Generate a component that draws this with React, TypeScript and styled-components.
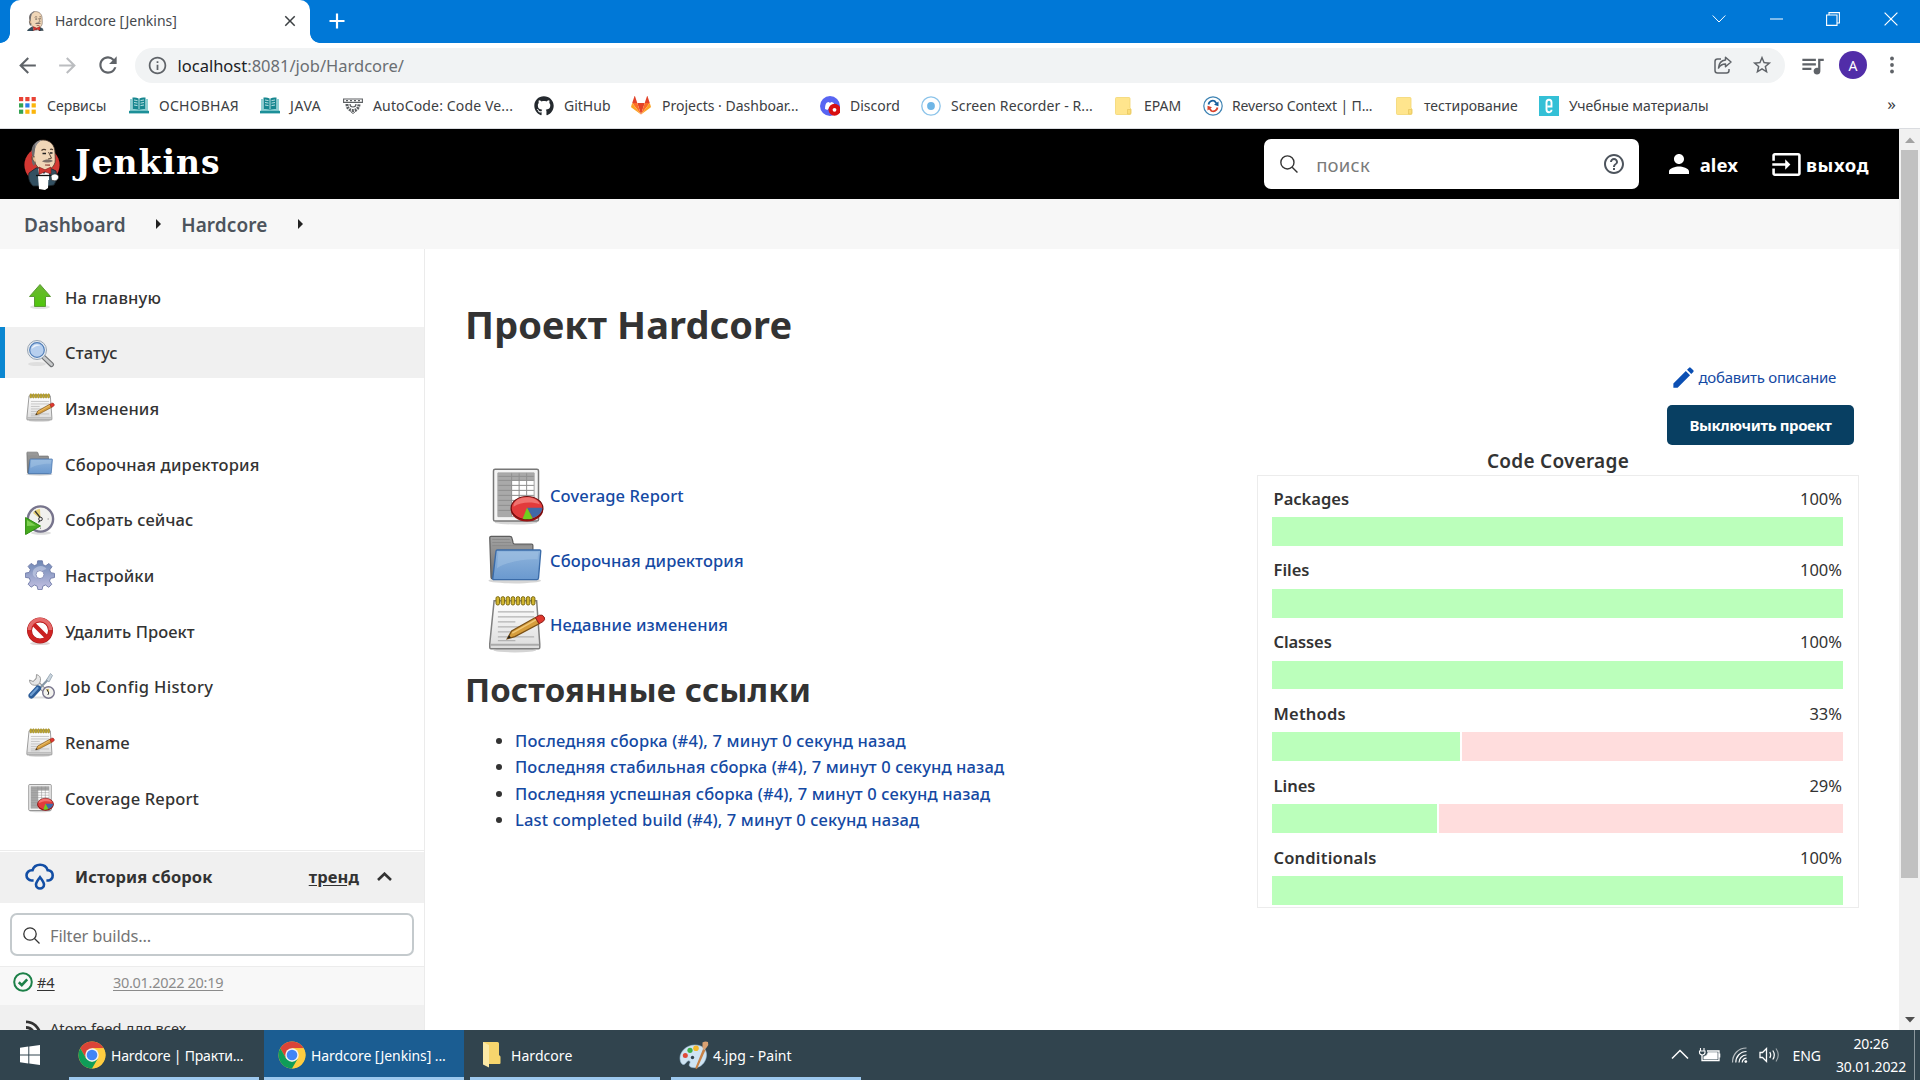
import React from "react";
import styled, { createGlobalStyle, css } from "styled-components";
import {
  MdArrowBack,
  MdArrowForward,
  MdClose,
  MdEdit,
  MdHelpOutline,
  MdInfoOutline,
  MdInput,
  MdPerson,
  MdQueueMusic,
  MdRefresh,
  MdRssFeed,
  MdStarBorder,
} from "react-icons/md";
import { FaGithub } from "react-icons/fa";

const Global = createGlobalStyle`
  *, *::before, *::after { box-sizing: border-box; }
  html, body { margin: 0; padding: 0; overflow: hidden; background: #fff; }
  body { font-family: "Noto Sans", "Open Sans", sans-serif; color: #333; }
  svg { display: block; flex: none; }
`;

const Screen = styled.div`
  width: 1920px;
  height: 1080px;
  display: grid;
  grid-template-rows: 1030px 50px;
  overflow: hidden;
`;

const Browser = styled.div`
  display: grid;
  grid-template-rows: 43px 45px 40px 1px 901px;
  overflow: hidden;
  background: #fff;
`;

/* ---------- tab strip ---------- */

const TabStrip = styled.div`
  display: flex;
  background: #0078d7;
  align-items: stretch;
`;

const TabFlare = styled.div<{ $side: "left" | "right" }>`
  width: 10px;
  background: radial-gradient(
    circle at ${(p) => (p.$side === "left" ? "0 33px" : "10px 33px")},
    #0078d7 9.5px,
    #fff 10.2px
  );
  ${css`clip-path: inset(33px 0 0 0);`}
`;

const Tab = styled.div`
  width: 300px;
  background: #fff;
  border-radius: 10px 10px 0 0;
  display: flex;
  align-items: center;
  padding: 0 11px 2px 16px;
  font-size: 14px;
  color: #45494d;
`;

const TabTitle = styled.span`
  margin-left: 10px;
  flex: 1;
  white-space: nowrap;
`;

const NewTab = styled.div`
  display: flex;
  align-items: center;
  padding: 0 0 1px 9px;
`;

const WindowButtons = styled.div`
  margin-left: auto;
  display: flex;
  width: 230px;
  height: 37px;
`;

const WindowButton = styled.div`
  width: 57.4px;
  display: grid;
  place-items: center;
`;

/* ---------- toolbar ---------- */

const Toolbar = styled.div`
  display: flex;
  align-items: center;
  padding: 0 0 1px 15px;
  color: #5f6368;
`;

const NavButton = styled.div<{ $dim?: boolean }>`
  width: 40px;
  display: flex;
  color: ${(p) => (p.$dim ? "#bbbdc0" : "#5f6368")};
`;

const Omnibox = styled.div`
  width: 1650px;
  height: 35px;
  border-radius: 18px;
  background: #f1f3f4;
  display: flex;
  align-items: center;
  padding: 0 12px 0 12px;
`;

const Url = styled.div`
  flex: 1;
  margin: 1px 0 0 9.5px;
  font-size: 16.5px;
  color: #6a6e72;
  line-height: 30px;
  span { color: #202124; }
`;

const OmniIcons = styled.div`
  display: flex;
  gap: 18.5px;
  align-items: center;
`;

const ToolbarEnd = styled.div`
  display: flex;
  align-items: center;
  padding-left: 14px;
`;

const Avatar = styled.div`
  width: 28px;
  height: 28px;
  margin-left: 13px;
  margin-right: 23px;
  border-radius: 50%;
  background: #512da8;
  color: #fff;
  font-size: 14px;
  display: grid;
  place-items: center;
`;

/* ---------- bookmarks ---------- */

const Bookmarks = styled.div`
  display: flex;
  align-items: center;
  padding: 0 0 5px 19px;
  font-size: 14px;
  color: #3c4043;
`;

const Bookmark = styled.div<{ $width: number; $gap?: number; $spacing?: number }>`
  width: ${(p) => p.$width}px;
  display: flex;
  align-items: center;
  gap: ${(p) => p.$gap ?? 10}px;
  letter-spacing: ${(p) => p.$spacing ?? 0}px;
  white-space: nowrap;
`;

const BookmarkOverflow = styled.div`
  margin-left: auto;
  padding: 0 24px 4px 0;
  font-size: 17px;
`;

const Divider = styled.div`
  background: #dadce0;
`;

/* ---------- page ---------- */

const Viewport = styled.div`
  display: grid;
  grid-template-columns: 1899px 21px;
  overflow: hidden;
`;

const JenkinsPage = styled.div`
  display: grid;
  grid-template-rows: 70px 50px 781px;
  overflow: hidden;
`;

const Header = styled.header`
  background: #000;
  color: #fff;
  display: flex;
  align-items: center;
  padding: 0 30px 0 24px;
`;

const Brand = styled.div`
  margin: 0 auto 4px 14px;
  font: 700 33px "DejaVu Serif", serif;
  letter-spacing: 1px;
`;

const SearchBox = styled.div`
  width: 375px;
  height: 50px;
  border-radius: 7px;
  background: #fff;
  color: #7a7a7a;
  display: flex;
  align-items: center;
  padding: 0 13px 0 16px;
  font-size: 18.5px;
  letter-spacing: 0.25px;
`;

const SearchHint = styled.span`
  flex: 1;
  margin-left: 18px;
`;

const HeaderLink = styled.div<{ $left: number; $gap: number; $spacing: number }>`
  margin-left: ${(p) => p.$left}px;
  display: flex;
  align-items: center;
  gap: ${(p) => p.$gap}px;
  font-size: 18.5px;
  font-weight: 700;
  letter-spacing: ${(p) => p.$spacing}px;
`;

const Crumbs = styled.nav`
  background: #f7f7f7;
  display: flex;
  align-items: center;
  padding: 2px 24px 0;
  font-size: 19px;
  font-weight: 600;
  letter-spacing: 0.08px;
  color: #4d545d;
  svg { margin: 0 20px 3px 30.5px; }
`;

const Body = styled.div`
  display: grid;
  grid-template-columns: 425px 1fr;
  overflow: hidden;
`;

/* ---------- sidebar ---------- */

const Sidebar = styled.aside`
  border-right: 1px solid #ebebeb;
  display: flex;
  flex-direction: column;
`;

const Tasks = styled.div`
  display: flex;
  flex-direction: column;
  gap: 4.7px;
  height: 601px;
  padding-top: 22.5px;
`;

const Task = styled.div<{ $active?: boolean; $spacing?: number }>`
  height: 51px;
  flex: none;
  display: flex;
  align-items: center;
  gap: 10px;
  padding-left: 20px;
  border-left: 5px solid ${(p) => (p.$active ? "#0b87d1" : "transparent")};
  background: ${(p) => (p.$active ? "#f0f0f0" : "transparent")};
  font-size: 16.5px;
  font-weight: 500;
  letter-spacing: ${(p) => p.$spacing ?? 0.12}px;
`;

const HistoryHeader = styled.div`
  height: 53px;
  flex: none;
  border-top: 1px solid #ececec;
  padding-top: 1px;
`;

const HistoryBand = styled.div`
  height: 51px;
  background: #f0f0f0;
  display: flex;
  align-items: center;
  padding: 0 32px 3px 25px;
  font-size: 16.5px;
  font-weight: 700;
  letter-spacing: 0.1px;
`;

const HistoryTitle = styled.span`
  margin-left: 20px;
  flex: 1;
`;

const Trend = styled.span`
  text-decoration: underline;
  text-underline-offset: 2px;
  margin-right: 18px;
`;

const FilterRow = styled.div`
  height: 63px;
  flex: none;
  padding: 10px 10px 0;
`;

const Filter = styled.div`
  height: 43px;
  border: 2px solid #c4cacd;
  border-radius: 7px;
  display: flex;
  align-items: center;
  gap: 10px;
  padding: 2px 0 0 11px;
  font-size: 16.5px;
  letter-spacing: -0.16px;
  color: #757575;
`;

const BuildRow = styled.div`
  height: 39px;
  flex: none;
  border-top: 1px solid #ececec;
  background: #f8f8f8;
  display: flex;
  align-items: center;
  padding: 0 0 8px 13px;
  font-size: 14.5px;
`;

const BuildNumber = styled.span`
  width: 76px;
  margin-left: 4px;
  text-decoration: underline;
  text-underline-offset: 2px;
`;

const BuildDate = styled.span`
  color: #8b8b8b;
  letter-spacing: -0.3px;
  text-decoration: underline;
  text-underline-offset: 2px;
`;

const FeedRow = styled.div`
  flex: 1;
  background: #f0f0f0;
  padding: 11px 0 0 22px;
  display: flex;
  align-items: flex-start;
  gap: 4px;
  font-size: 14.5px;
  line-height: 24px;
  letter-spacing: 0.08px;
`;

/* ---------- main ---------- */

const Main = styled.main`
  padding: 52px 40px 0 40px;
`;

const Title = styled.h1`
  margin: 0;
  font-size: 38px;
  line-height: 46px;
  font-weight: 700;
  letter-spacing: 0.1px;
`;

const Columns = styled.div`
  display: flex;
  justify-content: space-between;
`;

const LinkColumn = styled.div`
  padding-top: 116.3px;
`;

const BigLink = styled.div`
  height: 64.5px;
  margin-left: 21px;
  display: flex;
  align-items: center;
  gap: 4px;
  font-size: 16.5px;
  font-weight: 500;
  letter-spacing: 0.12px;
  color: #1449a3;
`;

const Subtitle = styled.h2`
  margin: 13.500px 0 0;
  font-size: 33px;
  line-height: 40px;
  font-weight: 700;
  letter-spacing: 0.1px;
`;

const Permalinks = styled.ul`
  margin: 16.500px 0 0;
  padding: 0;
  list-style: none;
`;

const Permalink = styled.li<{ $spacing: number }>`
  display: flex;
  align-items: center;
  height: 26.5px;
  padding-left: 31px;
  font-size: 16.5px;
  font-weight: 500;
  color: #1449a3;
  letter-spacing: ${(p) => p.$spacing}px;
  white-space: nowrap;
  &::before {
    content: "";
    width: 6px;
    height: 6px;
    margin: 1px 13px 0 0;
    border-radius: 50%;
    background: #333;
  }
`;

const Side = styled.div`
  width: 602px;
  display: flex;
  flex-direction: column;
  padding-top: 18px;
`;

const EditLink = styled.div`
  height: 24px;
  margin-right: 23px;
  align-self: flex-end;
  display: flex;
  align-items: center;
  gap: 1px;
  font-size: 15px;
  letter-spacing: -0.26px;
  color: #1449a3;
`;

const DisableButton = styled.button`
  align-self: flex-end;
  width: 187px;
  height: 40px;
  margin: 16px 5px 0 0;
  padding: 0;
  border: 0;
  border-radius: 5px;
  background: #083f62;
  color: #fff;
  font: 700 15px "Noto Sans", sans-serif;
  letter-spacing: -0.38px;
`;

const CoverageTitle = styled.div`
  height: 30px;
  line-height: 32px;
  text-align: center;
  font-size: 19px;
  font-weight: 600;
  letter-spacing: 0.25px;
`;

const CoverageBox = styled.div`
  height: 433px;
  border: 1px solid #ececec;
  padding: 10.6px 15px 0 14px;
  display: flex;
  flex-direction: column;
  gap: 12.6px;
`;

const Metric = styled.div`
  display: grid;
  grid-template-rows: 24px 28.8px;
  row-gap: 6.4px;
`;

const MetricHead = styled.div`
  display: flex;
  justify-content: space-between;
  padding: 0 1px 0 1.5px;
  font-size: 16.5px;
  line-height: 24px;
`;

const MetricName = styled.span<{ $spacing: number }>`
  font-weight: 600;
  letter-spacing: ${(p) => p.$spacing}px;
`;

const Bar = styled.div`
  display: flex;
  gap: 2px;
`;

const Covered = styled.div<{ $width: string }>`
  width: ${(p) => p.$width};
  background: #bbffbb;
`;

const Missed = styled.div`
  flex: 1;
  background: #ffdddd;
`;

/* ---------- scrollbar ---------- */

const Scrollbar = styled.div`
  background: #f1f1f1;
  display: grid;
  grid-template-rows: 21px 728px 1fr 21px;
  justify-items: center;
  align-items: center;
`;

const Thumb = styled.div`
  width: 17px;
  height: 728px;
  background: #c1c1c1;
`;

/* ---------- taskbar ---------- */

const Taskbar = styled.div`
  background: #31444e;
  display: flex;
  color: #fff;
  font-size: 14px;
`;

const StartButton = styled.div`
  width: 60px;
  display: grid;
  place-items: center;
`;

const TaskButton = styled.div<{ $active?: boolean; $left: number; $width: number; $pad: number; $gap: number; $spacing?: number }>`
  margin-left: ${(p) => p.$left}px;
  width: ${(p) => p.$width}px;
  padding-left: ${(p) => p.$pad}px;
  display: flex;
  align-items: center;
  gap: ${(p) => p.$gap}px;
  border-bottom: 3px solid #9cc8ee;
  background: ${(p) => (p.$active ? "#1b5d92" : "transparent")};
  letter-spacing: ${(p) => p.$spacing ?? 0}px;
  white-space: nowrap;
  padding-top: 3px;
`;

const Tray = styled.div`
  margin-left: auto;
  display: flex;
  align-items: center;
`;

const Language = styled.span`
  margin-left: 12px;
`;

const Clock = styled.div`
  width: 86px;
  margin-left: 7px;
  text-align: center;
  line-height: 23px;
  letter-spacing: -0.15px;
`;

const ShowDesktop = styled.div`
  width: 6px;
  height: 50px;
  border-left: 1px solid #8c979d;
`;

/* ---------- drawings ---------- */

const Butler = ({ w, h, box, badge }: { w: number; h: number; box: string; badge?: boolean }) => (
  <svg width={w} height={h} viewBox={box}>
    {badge && <circle cx="18" cy="26" r="17.600" fill="#d33833" />}
    <path d="M5 34l7-5 12-1 8 4 1 8-3 6-6 1H9c-4-4-5-8-4-13z" fill="#335061" stroke="#1b242b" strokeWidth=".8" />
    <path d="M14 29l6 6 5-6v12h-9z" fill="#fff" />
    <path d="M9 16c-1-9 3-15 10-15s12 5 12 13c0 5 1 9-1 12-2 3-5 6-8 6-5 0-9-4-11-8-3-1-4-6-2-8z" fill="#f0d6b7" stroke="#4b3a2e" strokeWidth=".8" />
    <path d="M9 18C5 9 10 2 18 1c-5 2-7 6-7 10l-1 7c1 3 2 5 0 9-2-2-3-6-1-9z" fill="#6d6b6d" />
    <path d="M11 5c2-3 5-4 7-4-4 2-6 5-7 9z" fill="#8f8d8f" />
    <path d="M11 18c-2-1-3 1-2 3s2 3 3 2" fill="#e8c39c" stroke="#4b3a2e" strokeWidth=".7" />
    <path d="M17.500 11.500q2-2 4.500-.6M26 10.500q1.500-.8 3 .4" stroke="#4b3a2e" strokeWidth="1.100" fill="none" />
    <path d="M18.500 14.500h3.500M26 14h2.500" stroke="#222" strokeWidth="1.300" />
    <path d="M24.500 13l3 6.200-3.500.8" stroke="#4b3a2e" strokeWidth=".9" fill="none" />
    <path d="M18 22.500c3-2.500 8-2.500 11-.5-3 1.500-7 2.500-11 .5z" fill="#7d7068" />
    <path d="M21 26l5 .2" stroke="#8b3a34" strokeWidth="1.200" />
    <path d="M15 28l6 2.800 6-2.800v7l-6-2.200-6 2.600z" fill="#d33833" stroke="#7c1512" strokeWidth=".6" />
    <path d="M14 37h10.500l-.5 12-3 2-6-1z" fill="#fff" />
    <path d="M12 36.500h16" stroke="#111" strokeWidth="1.300" />
    <path d="M27 37c2-3 7-2.500 7.500.5s-3 5.500-7 3.500z" fill="#fff" stroke="#333" strokeWidth=".7" />
  </svg>
);

const AppsGrid = () => (
  <svg width="17" height="17" viewBox="0 0 17 17">
    {["#e94235", "#e94235", "#e94235", "#34a352", "#2b7de9", "#fbb50b", "#34a352", "#fbb50b", "#fbb50b"].map((c, i) => (
      <rect key={i} x={(i % 3) * 6.3} y={Math.floor(i / 3) * 6.3} width="4.2" height="4.2" fill={c} />
    ))}
  </svg>
);

const BookIcon = () => (
  <svg width="20" height="17" viewBox="0 0 20 17">
    <path d="M1 14V2h2v10h14V2h2v12z" fill="#8fd0d3" />
    <path d="M3.500 .5c3 0 5.500.2 6.500 1.500C11 .700 13.500.5 16.500.5v11.500c-3 0-5.500 0-6.500 1.300C9 12 6.500 12 3.500 12z" fill="#17868f" />
    <path d="M10 2v10.500M5 3l3.500.6M5 5.500l3.500.6M5 8l3.500.6M15 3l-3.500.6M15 5.500l-3.500.6M15 8l-3.500.6" stroke="#c7e9ea" strokeWidth=".9" />
    <rect y="13.800" width="20" height="2.600" fill="#1c8f98" />
  </svg>
);

const AutoCodeIcon = () => (
  <svg width="20" height="16" viewBox="0 0 20 16" fill="none" stroke="#5c5f62">
    <path d="M.6 1h18.800v3.400H.6z" strokeWidth="1.100" />
    <path d="M3 2.700h2M7 2.700h2M11 2.700h2M15 2.700h2" strokeWidth="1.300" />
    <path d="M4 6c0 4 2.500 6.500 6 6.500S16 10 16 6" strokeWidth="3" strokeDasharray="2 .9" />
    <path d="M7 6c0 2 1.200 3 3 3s3-1 3-3" strokeWidth="1.200" />
    <path d="M7.500 13.500L10 15.500l2.500-2" />
  </svg>
);

const GitlabIcon = () => (
  <svg width="20" height="19" viewBox="0 0 20 19">
    <path d="M10 18.500L13.700 7H6.300z" fill="#e24329" />
    <path d="M10 18.500L6.300 7H1.200z" fill="#fc6d26" />
    <path d="M10 18.500L13.700 7h5.100z" fill="#fc6d26" />
    <path d="M1.200 7L.1 10.500c-.1.400 0 .8.300 1L10 18.500zM18.800 7l1.100 3.500c.1.400 0 .8-.3 1L10 18.500z" fill="#fca326" />
    <path d="M1.200 7h5.100L4.100.4c-.1-.4-.6-.4-.7 0zM18.800 7h-5.100L15.900.4c.1-.4.600-.4.700 0z" fill="#e24329" />
  </svg>
);

const DiscordIcon = () => (
  <svg width="20" height="20" viewBox="0 0 20 20">
    <circle cx="10" cy="10" r="10" fill="#5865f2" />
    <path d="M5 13c0-4 1-6 2-6.500l2-.5.4.8h1.200l.4-.8 2 .5c1 .5 2 2.500 2 6.500l-2.500 1-.8-1.200H8.300L7.500 14z" fill="#fff" />
    <circle cx="14.500" cy="13.800" r="6" fill="#d80f12" />
    <circle cx="14.500" cy="13.800" r="1.900" fill="#fff" />
  </svg>
);

const RecorderIcon = () => (
  <svg width="20" height="20" viewBox="0 0 20 20">
    <circle cx="10" cy="10" r="9.200" fill="#fff" stroke="#8cc4ea" strokeWidth="1.300" />
    <circle cx="10" cy="10" r="3.900" fill="#6fb6e6" />
  </svg>
);

const BookmarkFolder = () => (
  <svg width="17" height="18" viewBox="0 0 17 18">
    <path d="M1.500.5h12.500a1 1 0 0 1 1 1V11l1 1v4.500a1 1 0 0 1-1 1H1.500a1 1 0 0 1-1-1v-15a1 1 0 0 1 1-1z" fill="#ffe58d" stroke="#f3d672" strokeWidth=".8" />
    <path d="M12.500 17v-4.500h3.200V16a1 1 0 0 1-1 1z" fill="#fbdd77" stroke="#e5c45e" strokeWidth=".7" />
  </svg>
);

const ReversoIcon = () => (
  <svg width="20" height="20" viewBox="0 0 20 20" fill="none">
    <circle cx="10" cy="10" r="9.200" stroke="#3e83b3" strokeWidth="1.200" />
    <path d="M5.500 8.500C6 5.500 9 4 11.500 5l2 2.500" stroke="#16609c" strokeWidth="1.800" />
    <path d="M15.500 5.500v4.700l-4.500-1.400z" fill="#16609c" />
    <path d="M14.500 11.500c-.5 3-3.500 4.500-6 3.500l-2-2.500" stroke="#d9422c" strokeWidth="1.800" />
    <path d="M4.500 14.500V9.800L9 11.200z" fill="#d9422c" />
  </svg>
);

const EIcon = () => (
  <svg width="20" height="20" viewBox="0 0 20 20">
    <rect width="20" height="20" fill="#34c0d6" />
    <path d="M8.600 10.500h3.900V6.500c0-3.600-5-3.600-5 0v7c0 3.600 5 3.600 5 .3" fill="none" stroke="#fff" strokeWidth="1.900" />
  </svg>
);

const ArrowUpIcon = () => (
  <svg width="30" height="30" viewBox="0 0 30 30">
    <defs>
      <linearGradient id="up" x2="0" y2="1"><stop offset="0" stopColor="#6db635" /><stop offset="1" stopColor="#4fc60c" /></linearGradient>
    </defs>
    <ellipse cx="15" cy="25" rx="10" ry="2" fill="#e3e3e3" />
    <path d="M15 2.500L25.500 14.500h-5v10h-11v-10h-5z" fill="url(#up)" stroke="#5a9b34" strokeWidth="1" />
  </svg>
);

const LensIcon = () => (
  <svg width="30" height="30" viewBox="0 0 30 30">
    <ellipse cx="12" cy="26" rx="9" ry="2" fill="#dedede" />
    <path d="M18.500 19l8 7.600" stroke="#6f7173" strokeWidth="5" strokeLinecap="round" />
    <path d="M18.500 19l8 7.600" stroke="#c9cbcc" strokeWidth="2.800" strokeLinecap="round" />
    <circle cx="12" cy="12" r="9.500" fill="#e8edf2" stroke="#98a4b2" />
    <circle cx="12" cy="12" r="7.300" fill="#b7cfee" stroke="#4f7db8" strokeWidth="1.200" />
    <path d="M6.500 11c1-4 5-6 9-3.500-3 0-6 1-9 3.500z" fill="#eaf2fb" />
  </svg>
);

const NotepadIcon = ({ size }: { size: number }) => (
  <svg width={size} height={size} viewBox="0 0 48 48">
    <defs>
      <linearGradient id="pad" x2="0" y2="1"><stop offset="0" stopColor="#fff" /><stop offset="1" stopColor="#dcdcdc" /></linearGradient>
    </defs>
    <ellipse cx="23" cy="44.200" rx="17" ry="1.700" fill="#d4d4d4" />
    <path d="M6.500 4.500h34l2.500 34.500v3q0 1-1 1H4q-1 0-1-1v-3z" fill="url(#pad)" stroke="#7f7f7f" strokeWidth="1.200" />
    <path d="M3.500 39.800h39" stroke="#aaa" strokeWidth="1.600" />
    {Array.from({ length: 8 }, (_, i) => (
      <rect key={i} x={8 + i * 4.05} y="1.300" width="2.800" height="6.700" rx="1.300" fill="#d1b52f" stroke="#7c6a12" strokeWidth=".8" />
    ))}
    <path d="M9.500 13.500h29M9.500 17.500h29M9.500 21.500h14M9.500 25.500h26M9.500 29.500h19M9.500 33.500h29M9.500 36.500h14" stroke="#b3b3b3" strokeWidth="1.100" />
    <path d="M17 35l3.500-6.300L39.500 18l3 5-19.400 10.300z" fill="#d69d3c" stroke="#7a5016" strokeWidth="1" />
    <path d="M21 30.500L40.500 19.500" stroke="#f0c878" strokeWidth="1.200" />
    <path d="M39.500 18l3.200-1.800q2.500-.8 3.800 1.400 1.200 2-.8 3.600l-3.200 1.800z" fill="#e0382e" stroke="#8c211b" strokeWidth=".8" />
    <path d="M17 35l1.400-2.800 1.600 1.700z" fill="#222" />
  </svg>
);

const FolderIcon = ({ size }: { size: number }) => (
  <svg width={size} height={size} viewBox="0 0 48 48">
    <defs>
      <linearGradient id="fold" x2="0" y2="1"><stop offset="0" stopColor="#8fb4dc" /><stop offset="1" stopColor="#6a99cf" /></linearGradient>
      <linearGradient id="back" x2="0" y2="1"><stop offset="0" stopColor="#a3a3a3" /><stop offset="1" stopColor="#6d6d6d" /></linearGradient>
    </defs>
    <ellipse cx="23" cy="40.500" rx="21" ry="2.200" fill="#d6d6d6" />
    <path d="M3 6q0-1 1-1h15q1.500 0 1.800 1.500l.9 3.800q.3 1 1.300 1H36.500q1 0 1 1V39H5.500q-1.500 0-1.500-1.500z" fill="url(#back)" stroke="#5e5e5e" strokeWidth="1" />
    <path d="M5 7.500h14M5 10h15M5 12.500h31" stroke="#8b8b8b" strokeWidth=".8" />
    <path d="M9 16h34q.9 0 .8 1L42 38.500q-.2 1.200-1.300 1.200H6.300q-1 0-.9-1L8 17q.1-1 1-1z" fill="url(#fold)" stroke="#3a6ba8" strokeWidth="1.100" />
    <path d="M8.800 30.500L9.900 17.500h32l-.6 6C31 23 16 25.500 8.800 30.500z" fill="#a3c3e4" opacity=".5" />
  </svg>
);

const ReportIcon = ({ size }: { size: number }) => (
  <svg width={size} height={size} viewBox="0 0 48 48">
    <ellipse cx="24" cy="45.200" rx="17" ry="1.600" fill="#d6d6d6" />
    <rect x="6" y="2.500" width="36" height="41.500" rx="1.300" fill="#f4f4f4" stroke="#777" strokeWidth="1.200" />
    <rect x="9.500" y="5.500" width="29" height="35" fill="#fff" />
    <path d="M9.500 5.500h29v6h-18v29h-11z" fill="#a9a9a9" />
    <path d="M9.500 11.500h29M9.500 15.500h29M9.500 19.500h29M9.500 23.500h29M9.500 27.500h29M9.500 31.500h29M9.500 35.500h29M9.500 8.300h29M20.500 5.500v35M26.500 5.500v35M32.500 5.500v35" stroke="#8f8f8f" strokeWidth=".8" />
    <path d="M9.500 5.500h29v35h-29z" fill="none" stroke="#a5a5a5" strokeWidth=".8" />
    <ellipse cx="32.800" cy="34.800" rx="13" ry="9.600" fill="#9c1313" />
    <ellipse cx="32.800" cy="33.600" rx="12.700" ry="9.200" fill="#e23b3b" stroke="#6b0d0d" strokeWidth=".9" />
    <path d="M22 32.500c0-9 18-10 21-2-6-2-15-2-21 2z" fill="#f0736f" />
    <path d="M32.800 33.300H45c0 4-3 6.800-7.500 8.200z" fill="#4069a8" />
    <path d="M32.800 33.300l4.500 8.600q-4 1.300-8 .3z" fill="#6fcf1f" />
  </svg>
);

const ClockIcon = () => (
  <svg width="30" height="30" viewBox="0 0 30 30">
    <ellipse cx="16" cy="28" rx="10" ry="1.800" fill="#ddd" />
    <circle cx="15.500" cy="14" r="12.600" fill="#f1f1ee" stroke="#77748c" strokeWidth="2.400" />
    <path d="M15.500 14L8 8q3-4 7-4z" fill="#e6cf74" />
    <path d="M10 6l6 7.500-2.500 4" fill="none" stroke="#333" strokeWidth="1.300" />
    <circle cx="15.500" cy="14" r="1.800" fill="#eee" stroke="#333" />
    <path d="M24 14h-1.500M15.500 22.500V24" stroke="#999" />
    <path d="M.6 12.500L15.500 21 .6 29.500z" fill="#47ab1f" stroke="#2f8a12" />
    <path d="M2 15l9 5.500L2 21z" fill="#7fd052" />
  </svg>
);

const GearIcon = () => (
  <svg width="30" height="30" viewBox="0 0 30 30">
    <defs>
      <linearGradient id="gear" x2="0" y2="1"><stop offset="0" stopColor="#6d87b4" /><stop offset="1" stopColor="#c3c0e2" /></linearGradient>
    </defs>
    <path
      d="M12.700.8h4.600l.7 3.900 2.700 1.100 3.300-2.300 3 3.200-2.300 3.200 1.100 2.800 3.700.7v4.100l-3.900.8-1.100 2.700 2.300 3.300-3.100 3-3.200-2.300-2.700 1.200-.7 3.400h-4.200l-.8-3.500-2.700-1.100-3.300 2.200-3-3 2.300-3.300L4.300 18l-3.900-.6v-4.300l3.900-.7 1.100-2.800-2.300-3.200 3-3 3.300 2.200 2.700-1z"
      fill="url(#gear)" stroke="#6f7ba8" strokeWidth=".9" strokeLinejoin="round"
    />
    <path d="M9 9c5-5 11-3 12.500 0-4 1-8 4-9 9-5-1-6-5-3.500-9z" fill="#d5dcf0" opacity=".5" />
    <circle cx="15" cy="14.600" r="4" fill="#fff" stroke="#8a92bb" />
  </svg>
);

const ForbidIcon = () => (
  <svg width="30" height="30" viewBox="0 0 30 30">
    <ellipse cx="15" cy="27.500" rx="10" ry="1.600" fill="#e0d5d5" />
    <circle cx="15" cy="14.500" r="10.500" fill="#fff" stroke="#a41c1c" strokeWidth="5" />
    <path d="M8 7.500l14 14" stroke="#c92020" strokeWidth="4.400" />
    <circle cx="15" cy="14.500" r="10.500" fill="none" stroke="#cf2323" strokeWidth="4" />
    <path d="M4.500 14a10.500 10.500 0 0 1 21 0" fill="none" stroke="#e56a6a" strokeWidth="3.600" />
  </svg>
);

const ToolsIcon = () => (
  <svg width="30" height="30" viewBox="0 0 30 30">
    <path d="M3.500 25.500h24" stroke="#ddd" strokeWidth="2" />
    <path d="M9 8l13 13" stroke="#8d8d8d" strokeWidth="4.600" />
    <path d="M9 8l13 13" stroke="#e6e6e6" strokeWidth="3" />
    <path d="M11.500 2.500A5.500 5.500 0 1 1 4.500 8l3.700 1.500 3-2.800z" fill="#e6e6e6" stroke="#929292" strokeWidth=".9" />
    <path d="M24 6.500L14 17" stroke="#8798a6" strokeWidth="2.200" />
    <path d="M25.500 1.500l2 2-3.500 6.500-2.500-2.200z" fill="#c9d4dd" stroke="#8798a6" strokeWidth=".7" />
    <path d="M13 16.500l-6.500 7" stroke="#2b5c98" strokeWidth="6" strokeLinecap="round" />
    <path d="M12.500 16l-6.500 7" stroke="#6e9ed2" strokeWidth="2.200" strokeLinecap="round" />
    <circle cx="23.500" cy="20.500" r="5.800" fill="#f3f3ee" stroke="#77748c" strokeWidth="1.400" />
    <path d="M23.800 21l-3-3.500 3-.8z" fill="#dcc05c" />
    <path d="M22 17.500l1.800 3.500-1 2" stroke="#333" fill="none" />
  </svg>
);

const CloudDrop = () => (
  <svg width="30" height="30" viewBox="0 0 30 30" fill="none" stroke="#124ea5" strokeWidth="2.600">
    <path d="M8.600 19.500H6.500a5 5 0 0 1 .2-10.200h.8a8 8 0 0 1 15.200 0h.7a5.200 5.200 0 0 1 .2 10.200h-2.200" />
    <path d="M15 16.200c2.800 3.500 4 5.400 4 7.300a4 4 0 0 1-8 0c0-1.900 1.200-3.800 4-7.300z" />
  </svg>
);

const SearchIcon = ({ size }: { size: number }) => (
  <svg width={size} height={size} viewBox="0 0 17 17" fill="none" stroke="#333" strokeWidth="1.300">
    <circle cx="7" cy="7" r="6.200" />
    <path d="M11.500 11.500l5 5" />
  </svg>
);

const CheckCircle = () => (
  <svg width="20" height="20" viewBox="0 0 20 20" fill="none" stroke="#1c8048" strokeWidth="2">
    <circle cx="10" cy="10" r="8.800" />
    <path d="M5.800 10.200l3 2.900 5.400-5.700" strokeWidth="2.600" />
  </svg>
);

const ShareIcon = () => (
  <svg width="20" height="20" viewBox="0 0 20 20" fill="none" stroke="#5f6368" strokeWidth="1.500">
    <path d="M8 4H4.500A2.500 2.500 0 0 0 2 6.500v9A2.500 2.500 0 0 0 4.500 18h9a2.500 2.500 0 0 0 2.500-2.500V14" />
    <path d="M12.500 2.200L18 7l-5.500 4.800V9C9 9 7 10.500 5.500 13c.3-4 2.500-7.500 7-8z" strokeLinejoin="round" />
  </svg>
);

const ChromeIcon = () => (
  <svg width="28" height="28" viewBox="0 0 28 28">
    <circle cx="14" cy="14" r="13.500" fill="#fcc934" />
    <path d="M2.310 7.250A13.500 13.500 0 0 1 25.690 7.250L14 7.250 8.150 17.380z" fill="#db4437" />
    <path d="M25.690 7.250H14L19.850 17.380 14 27.500A13.500 13.500 0 0 0 25.690 7.250z" fill="#ffcd40" />
    <path d="M2.310 7.250L8.150 17.380 14 20.750 19.850 17.380 14 27.500A13.500 13.500 0 0 1 2.310 7.250z" fill="#0f9d58" />
    <circle cx="14" cy="14" r="6.750" fill="#f1f1f1" />
    <circle cx="14" cy="14" r="5.300" fill="#4285f4" />
  </svg>
);

const WinLogo = () => (
  <svg width="20" height="20" viewBox="0 0 20 20" fill="#fff">
    <path d="M0 2.800L8.300 1.600v8H0zM9.300 1.500L20 0v9.600H9.300zM0 10.500h8.300v8L0 17.300zM9.300 10.500H20V20L9.300 18.600z" />
  </svg>
);

const TaskFolder = () => (
  <svg width="20" height="28" viewBox="0 0 20 28">
    <path d="M1 1h14.500q1.500 0 1.500 1.500V14l1.500 1.500V22q0 1-1 1H6z" fill="#f6d56d" />
    <path d="M1 1l6 3v22.500L1 23.500z" fill="#fbe9a6" />
  </svg>
);

const PaintIcon = () => (
  <svg width="30" height="29" viewBox="0 0 30 29">
    <path d="M16 4C7 4 1 11 1 17c0 4 2 7 4 6.500C8 22 8 19 10.500 20c2 1-1 3 0 5 1 1.500 4 2 7 1.500 6-1 10-7 10-13C27.500 8 23 4 16 4z" fill="#cfe4f3" stroke="#9fc3dc" strokeWidth=".6" />
    <circle cx="6.300" cy="14.500" r="2.500" fill="#e04a3a" />
    <circle cx="11" cy="9.300" r="2.600" fill="#3fae49" />
    <circle cx="17" cy="7.300" r="2.800" fill="#f5b829" />
    <circle cx="13.500" cy="16.500" r="1.700" fill="#33454f" />
    <path d="M24 8l2.500 1-8.500 19-1.800-.8z" fill="#c98246" />
    <path d="M23.500 1.500q3-1.500 5.500-.5 1 3-1 5l-2 2.500-2.500-1.300z" fill="#d9a172" />
  </svg>
);

const TrayIcons = () => (
  <svg width="98" height="24" viewBox="0 0 98 24" fill="none" stroke="#fff" strokeWidth="1.300">
    <path d="M1 15.500L9 7.500l8 8" strokeWidth="1.500" />
    <path d="M29.500 5v3M33 5v3" strokeWidth="1.100" />
    <path d="M28.500 8h5.500v1.500q0 2.200-2.700 2.500-2.800-.3-2.800-2.500z" strokeWidth="1.100" />
    <path d="M31 12v5.500h17V8h-12" />
    <path d="M32.800 13.500V16h13.500V9.500h-9.500q-.3 3.500-4 4z" fill="#fff" strokeWidth=".6" />
    <path d="M48.500 10.500v4" strokeWidth="1.600" />
    <g strokeWidth="1.200">
      <path d="M61.500 19.500c0-8 5.500-14.500 14-14.500" opacity=".65" />
      <path d="M64.800 19.500c0-6 4.500-11 10.700-11" />
      <path d="M68 19.500c0-4 3.200-7.500 7.500-7.500" />
      <path d="M71.200 19.500c0-2.300 1.800-4.300 4.300-4.300" />
    </g>
    <circle cx="74.800" cy="18.600" r="1.400" fill="#fff" stroke="none" />
    <path d="M89 9.500h2.500l4-4v13l-4-4H89z" />
  </svg>
);

const SoundWaves = () => (
  <svg width="11" height="20" viewBox="0 0 11 20" fill="none" stroke="#fff" strokeWidth="1.200">
    <path d="M.8 7q1.800 3 0 6M3.800 5.500q3 4.500 0 9" />
    <path d="M7 3.500q4.500 6.500 0 13" opacity=".5" />
  </svg>
);

const CrumbArrow = () => (
  <svg width="5" height="10" viewBox="0 0 5 10"><path d="M0 0l5 5-5 5z" fill="#222" /></svg>
);

/* ---------- data ---------- */

const bookmarks: { label: string; icon: React.ReactNode; width: number; gap?: number; spacing?: number }[] = [
  { label: "Сервисы", icon: <AppsGrid />, width: 110, gap: 11 },
  { label: "ОСНОВНАЯ", icon: <BookIcon />, width: 131, spacing: 0.25 },
  { label: "JAVA", icon: <BookIcon />, width: 83, spacing: 0.6 },
  { label: "AutoCode: Code Ve...", icon: <AutoCodeIcon />, width: 191, spacing: 0.15 },
  { label: "GitHub", icon: <FaGithub size={20} color="#24292e" />, width: 97 },
  { label: "Projects · Dashboar...", icon: <GitlabIcon />, width: 189, gap: 11 },
  { label: "Discord", icon: <DiscordIcon />, width: 101 },
  { label: "Screen Recorder - R...", icon: <RecorderIcon />, width: 194, spacing: 0.12 },
  { label: "EPAM", icon: <BookmarkFolder />, width: 88, gap: 12 },
  { label: "Reverso Context | П...", icon: <ReversoIcon />, width: 193, spacing: -0.14, gap: 9 },
  { label: "тестирование", icon: <BookmarkFolder />, width: 143, gap: 11 },
  { label: "Учебные материалы", icon: <EIcon />, width: 180 },
];

const tasks: { label: string; icon: React.ReactNode; active?: boolean; spacing?: number }[] = [
  { label: "На главную", icon: <ArrowUpIcon />, spacing: 0.2 },
  { label: "Статус", icon: <LensIcon />, active: true },
  { label: "Изменения", icon: <NotepadIcon size={30} /> },
  { label: "Сборочная директория", icon: <FolderIcon size={30} />, spacing: 0.16 },
  { label: "Собрать сейчас", icon: <ClockIcon /> },
  { label: "Настройки", icon: <GearIcon /> },
  { label: "Удалить Проект", icon: <ForbidIcon />, spacing: 0.08 },
  { label: "Job Config History", icon: <ToolsIcon />, spacing: 0.35 },
  { label: "Rename", icon: <NotepadIcon size={30} />, spacing: 0 },
  { label: "Coverage Report", icon: <ReportIcon size={30} />, spacing: 0.14 },
];

const permalinks: [string, number][] = [
  ["Последняя сборка (#4), 7 минут 0 секунд назад", 0.17],
  ["Последняя стабильная сборка (#4), 7 минут 0 секунд назад", 0.13],
  ["Последняя успешная сборка (#4), 7 минут 0 секунд назад", 0.14],
  ["Last completed build (#4), 7 минут 0 секунд назад", 0.13],
];

const metrics: { name: string; value: string; covered: string; spacing?: number }[] = [
  { name: "Packages", value: "100%", covered: "100%" },
  { name: "Files", value: "100%", covered: "100%" },
  { name: "Classes", value: "100%", covered: "100%", spacing: -0.1 },
  { name: "Methods", value: "33%", covered: "188px", spacing: 0.2 },
  { name: "Lines", value: "29%", covered: "165px" },
  { name: "Conditionals", value: "100%", covered: "100%", spacing: 0.2 },
];

export default function App() {
  return (
    <Screen>
      <Global />
      <Browser>
        <TabStrip>
          <TabFlare $side="left" />
          <Tab>
            <Butler w={19} h={20} box="5 0 28 36" />
            <TabTitle>Hardcore [Jenkins]</TabTitle>
            <MdClose size={18} color="#3c4043" />
          </Tab>
          <TabFlare $side="right" />
          <NewTab>
            <svg width="16" height="16" viewBox="0 0 16 16" stroke="#fff" strokeWidth="2.200">
              <path d="M8 .5v15M.5 8h15" />
            </svg>
          </NewTab>
          <WindowButtons>
            <WindowButton>
              <svg width="14" height="8" viewBox="0 0 14 8" fill="none" stroke="#fff" strokeWidth="1"><path d="M.7.5L7 7l6.300-6.500" /></svg>
            </WindowButton>
            <WindowButton>
              <svg width="13" height="2" viewBox="0 0 13 2"><path d="M0 .5h13v1H0z" fill="#fff" /></svg>
            </WindowButton>
            <WindowButton>
              <svg width="14" height="14" viewBox="0 0 14 14" fill="none" stroke="#fff" strokeWidth="1.100"><path d="M.6 3h10.400v10.400H.6zM3 3V.6h10.400V11H11" /></svg>
            </WindowButton>
            <WindowButton>
              <svg width="14" height="14" viewBox="0 0 14 14" stroke="#fff" strokeWidth="1.200"><path d="M.6.6l12.800 12.800M13.400.6L.6 13.400" /></svg>
            </WindowButton>
          </WindowButtons>
        </TabStrip>

        <Toolbar>
          <NavButton><MdArrowBack size={25} /></NavButton>
          <NavButton $dim><MdArrowForward size={25} /></NavButton>
          <NavButton><MdRefresh size={26} /></NavButton>
          <Omnibox>
            <MdInfoOutline size={21} />
            <Url><span>localhost</span>:8081/job/Hardcore/</Url>
            <OmniIcons>
              <ShareIcon />
              <MdStarBorder size={22} />
            </OmniIcons>
          </Omnibox>
          <ToolbarEnd>
            <MdQueueMusic size={27} />
            <Avatar>A</Avatar>
            <svg width="4" height="18" viewBox="0 0 4 18" fill="#5f6368"><circle cx="2" cy="2.500" r="1.900" /><circle cx="2" cy="9" r="1.900" /><circle cx="2" cy="15.500" r="1.900" /></svg>
          </ToolbarEnd>
        </Toolbar>

        <Bookmarks>
          {bookmarks.map((b) => (
            <Bookmark key={b.label} $width={b.width} $gap={b.gap} $spacing={b.spacing}>
              {b.icon}
              {b.label}
            </Bookmark>
          ))}
          <BookmarkOverflow>»</BookmarkOverflow>
        </Bookmarks>
        <Divider />

        <Viewport>
          <JenkinsPage>
            <Header>
              <Butler w={37} h={51} box="0 0 37 51" badge />
              <Brand>Jenkins</Brand>
              <SearchBox>
                <SearchIcon size={18} />
                <SearchHint>поиск</SearchHint>
                <MdHelpOutline size={24} color="#4d545d" />
              </SearchBox>
              <HeaderLink $left={25} $gap={5.5} $spacing={0.1}>
                <MdPerson size={30} />
                alex
              </HeaderLink>
              <HeaderLink $left={33} $gap={4} $spacing={0.55}>
                <MdInput size={31} />
                выход
              </HeaderLink>
            </Header>
            <Crumbs>
              Dashboard
              <CrumbArrow />
              Hardcore
              <CrumbArrow />
            </Crumbs>
            <Body>
              <Sidebar>
                <Tasks>
                  {tasks.map((t) => (
                    <Task key={t.label} $active={t.active} $spacing={t.spacing}>
                      {t.icon}
                      {t.label}
                    </Task>
                  ))}
                </Tasks>
                <HistoryHeader>
                  <HistoryBand>
                    <CloudDrop />
                    <HistoryTitle>История сборок</HistoryTitle>
                    <Trend>тренд</Trend>
                    <svg width="15" height="9" viewBox="0 0 15 9" fill="none" stroke="#333" strokeWidth="2.600"><path d="M1 8l6.500-6.300L14 8" /></svg>
                  </HistoryBand>
                </HistoryHeader>
                <FilterRow>
                  <Filter>
                    <SearchIcon size={17} />
                    Filter builds...
                  </Filter>
                </FilterRow>
                <BuildRow>
                  <CheckCircle />
                  <BuildNumber>#4</BuildNumber>
                  <BuildDate>30.01.2022 20:19</BuildDate>
                </BuildRow>
                <FeedRow>
                  <MdRssFeed size={24} />
                  Atom feed для всех
                </FeedRow>
              </Sidebar>
              <Main>
                <Title>Проект Hardcore</Title>
                <Columns>
                  <LinkColumn>
                    <BigLink><ReportIcon size={60} />Coverage Report</BigLink>
                    <BigLink><FolderIcon size={60} />Сборочная директория</BigLink>
                    <BigLink><NotepadIcon size={60} />Недавние изменения</BigLink>
                    <Subtitle>Постоянные ссылки</Subtitle>
                    <Permalinks>
                      {permalinks.map(([label, spacing]) => (
                        <Permalink key={label} $spacing={spacing}>{label}</Permalink>
                      ))}
                    </Permalinks>
                  </LinkColumn>
                  <Side>
                    <EditLink>
                      <MdEdit size={27} color="#0b4fb3" />
                      добавить описание
                    </EditLink>
                    <DisableButton>Выключить проект</DisableButton>
                    <CoverageTitle>Code Coverage</CoverageTitle>
                    <CoverageBox>
                      {metrics.map((m) => (
                        <Metric key={m.name}>
                          <MetricHead>
                            <MetricName $spacing={m.spacing ?? 0}>{m.name}</MetricName>
                            <span>{m.value}</span>
                          </MetricHead>
                          <Bar>
                            <Covered $width={m.covered} />
                            {m.covered !== "100%" && <Missed />}
                          </Bar>
                        </Metric>
                      ))}
                    </CoverageBox>
                  </Side>
                </Columns>
              </Main>
            </Body>
          </JenkinsPage>
          <Scrollbar>
            <svg width="10" height="6" viewBox="0 0 10 6"><path d="M0 6l5-5.500L10 6z" fill="#a3a3a3" /></svg>
            <Thumb />
            <span />
            <svg width="10" height="6" viewBox="0 0 10 6"><path d="M0 0l5 5.500L10 0z" fill="#505050" /></svg>
          </Scrollbar>
        </Viewport>
      </Browser>

      <Taskbar>
        <StartButton><WinLogo /></StartButton>
        <TaskButton $left={9} $width={190} $pad={9} $gap={5} $spacing={-0.2}>
          <ChromeIcon />
          Hardcore | Практи...
        </TaskButton>
        <TaskButton $active $left={5} $width={200} $pad={14} $gap={5} $spacing={-0.09}>
          <ChromeIcon />
          Hardcore [Jenkins] ...
        </TaskButton>
        <TaskButton $left={6} $width={190} $pad={12} $gap={9} $spacing={0.05}>
          <TaskFolder />
          Hardcore
        </TaskButton>
        <TaskButton $left={11} $width={190} $pad={8} $gap={4} $spacing={0.05}>
          <PaintIcon />
          4.jpg - Paint
        </TaskButton>
        <Tray>
          <TrayIcons />
          <SoundWaves />
          <Language>ENG</Language>
          <Clock>
            20:26
            <br />
            30.01.2022
          </Clock>
          <ShowDesktop />
        </Tray>
      </Taskbar>
    </Screen>
  );
}
